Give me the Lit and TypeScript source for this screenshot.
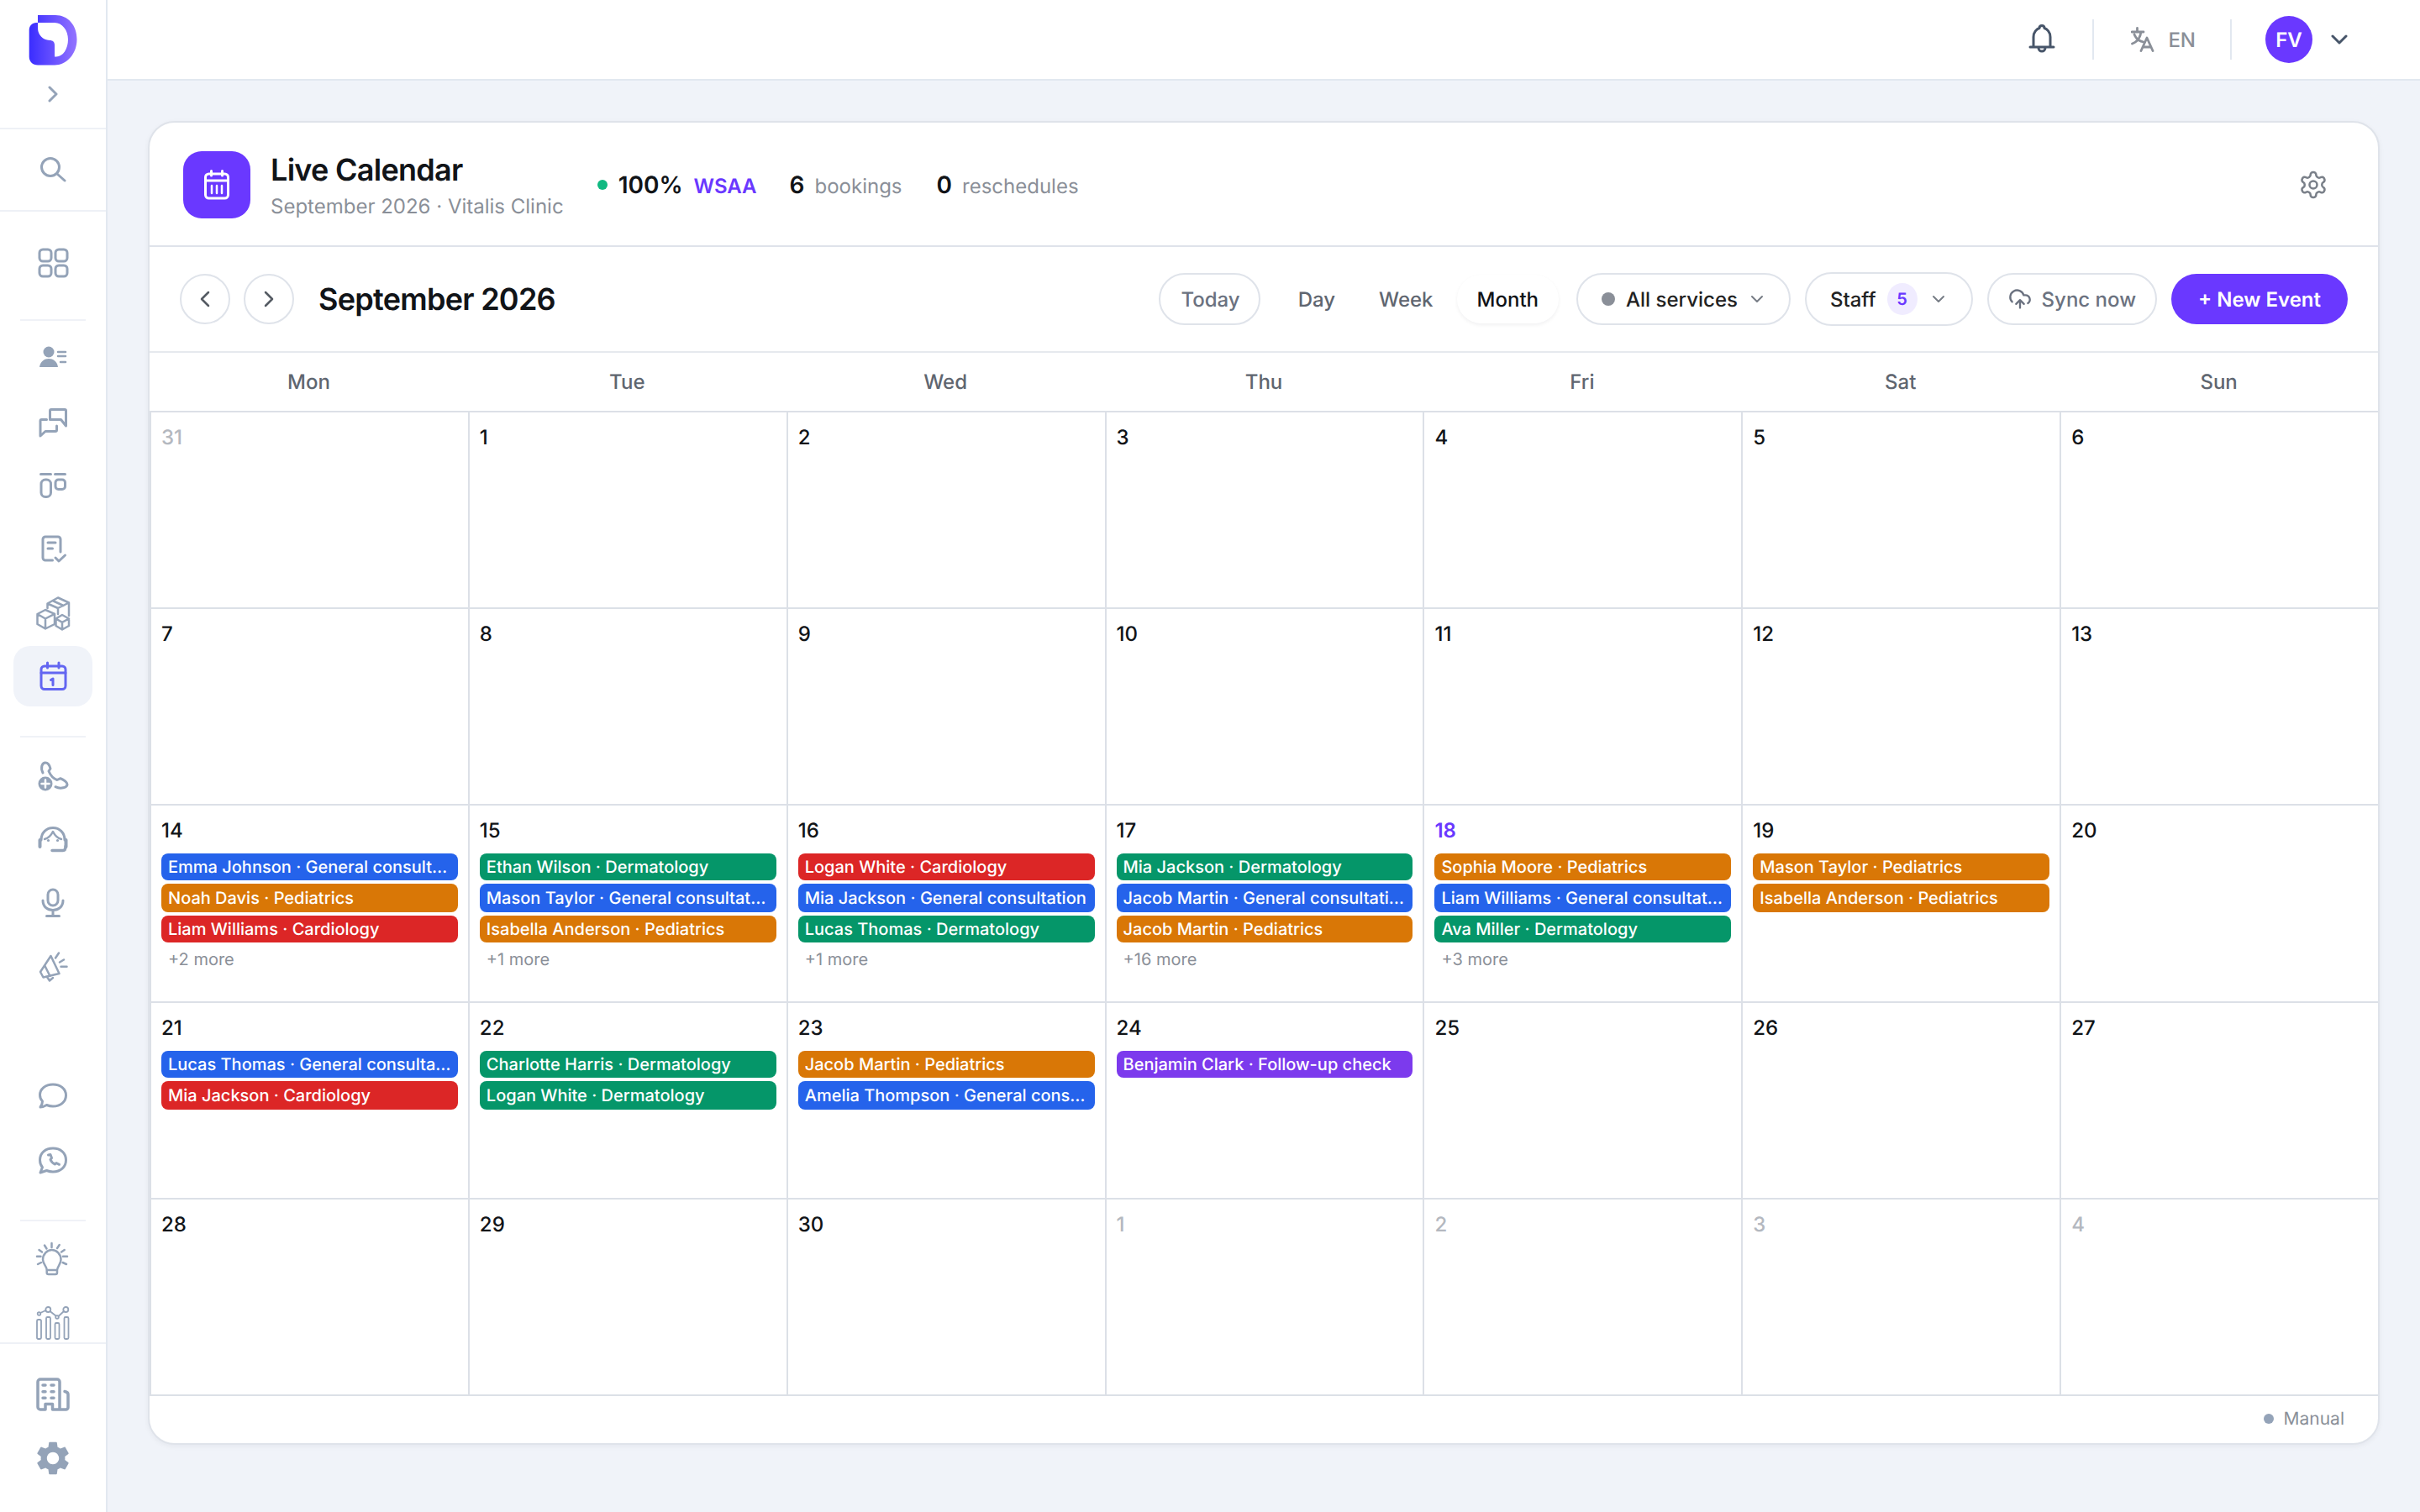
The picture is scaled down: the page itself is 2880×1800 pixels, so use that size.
import { LitElement, html, css, svg } from 'lit';
import { customElement } from 'lit/decorators.js';

type Ev = [string, string];
type Day = { n: number; out?: boolean; today?: boolean; ev?: Ev[]; more?: number };

const GC = 'General consultation';
const weeks: Day[][] = [
  [{ n: 31, out: true }, { n: 1 }, { n: 2 }, { n: 3 }, { n: 4 }, { n: 5 }, { n: 6 }],
  [{ n: 7 }, { n: 8 }, { n: 9 }, { n: 10 }, { n: 11 }, { n: 12 }, { n: 13 }],
  [
    { n: 14, more: 2, ev: [[`Emma Johnson · ${GC}`, 'blue'], ['Noah Davis · Pediatrics', 'orange'], ['Liam Williams · Cardiology', 'red']] },
    { n: 15, more: 1, ev: [['Ethan Wilson · Dermatology', 'green'], [`Mason Taylor · ${GC}`, 'blue'], ['Isabella Anderson · Pediatrics', 'orange']] },
    { n: 16, more: 1, ev: [['Logan White · Cardiology', 'red'], [`Mia Jackson · ${GC}`, 'blue'], ['Lucas Thomas · Dermatology', 'green']] },
    { n: 17, more: 16, ev: [['Mia Jackson · Dermatology', 'green'], [`Jacob Martin · ${GC}`, 'blue'], ['Jacob Martin · Pediatrics', 'orange']] },
    { n: 18, today: true, more: 3, ev: [['Sophia Moore · Pediatrics', 'orange'], [`Liam Williams · ${GC}`, 'blue'], ['Ava Miller · Dermatology', 'green']] },
    { n: 19, ev: [['Mason Taylor · Pediatrics', 'orange'], ['Isabella Anderson · Pediatrics', 'orange']] },
    { n: 20 },
  ],
  [
    { n: 21, ev: [[`Lucas Thomas · ${GC}`, 'blue'], ['Mia Jackson · Cardiology', 'red']] },
    { n: 22, ev: [['Charlotte Harris · Dermatology', 'green'], ['Logan White · Dermatology', 'green']] },
    { n: 23, ev: [['Jacob Martin · Pediatrics', 'orange'], [`Amelia Thompson · ${GC}`, 'blue']] },
    { n: 24, ev: [['Benjamin Clark · Follow-up check', 'purple']] },
    { n: 25 }, { n: 26 }, { n: 27 },
  ],
  [{ n: 28 }, { n: 29 }, { n: 30 }, { n: 1, out: true }, { n: 2, out: true }, { n: 3, out: true }, { n: 4, out: true }],
];

const icon = (body: unknown, sw = 3) => html`<svg class="ic" viewBox="0 0 40 40" stroke-width=${sw}>${body}</svg>`;

const icons = {
  grid: icon(svg`<rect x="4" y="4" width="14" height="14" rx="4"/><rect x="23" y="4" width="14" height="14" rx="4"/><rect x="4" y="23" width="14" height="13" rx="4"/><rect x="23" y="23" width="14" height="13" rx="4"/>`),
  person: icon(svg`<circle cx="15" cy="14" r="6.5" fill="currentColor" stroke="none"/><path d="M4 32C5 25 10 22 15 22s10 3 11 10z" fill="currentColor" stroke="none"/><path d="M26 14h9M26 19h9M29 26h6" stroke-width="2.5"/>`),
  chat: icon(svg`<path d="M16.5 18.5V8a1.5 1.5 0 0 1 1.5-1.5h16A1.5 1.5 0 0 1 35.5 8v18l-6-7.500z"/><path d="M24.500 26v5a1.500 1.500 0 0 1-1.500 1.500H11L5 38V20a1.500 1.500 0 0 1 1.500-1.500h6"/>`),
  kanban: icon(svg`<path d="M5.500 7.500h12M22.500 7.500h12"/><rect x="6" y="14" width="11.500" height="20.500" rx="5"/><rect x="23" y="14" width="11.500" height="11.500" rx="3.500"/>`),
  noteCheck: icon(svg`<path d="M19.500 34H11a3 3 0 0 1-3-3V9a3 3 0 0 1 3-3h15a3 3 0 0 1 3 3v15"/><path d="M14 13h9M14 20h5.500"/><path d="M23 31l4 4 7.500-7"/>`),
  boxes: icon(svg`<path d="M1.500 22L11 17l11 4.800V34l-11 5.500L1.500 34zM1.500 22L11 27.500l11-5.700M11 27.500v12"/><path d="M13.500 15V9.500L26 2.500l13 6v15.500M13.500 9.500L26 15l13-6.500M26 15v7M19.500 6l13 6"/><path d="M23.500 27.500L31 23l8 4.500V36l-8 4.500L23.500 36zM23.500 27.500l7.500 4.300 8-4.300M31 31.800v8.500"/>`, 2.5),
  calendar: icon(svg`<rect x="6" y="8" width="29" height="27.500" rx="4"/><path d="M6 16h29M13.500 4v6M27 4v6"/><path d="M17.500 24.500l2.500-1.500v7.500"/>`),
  phonePlus: icon(svg`<path d="M8 17C5 11 7 5 11 5c3 0 5 3 6 7l-2 3c2 5 6 9 10 10.500l4-1.800c4 1.300 8 5 8 7 0 4-8 6-14 3"/><circle cx="11" cy="30" r="8.500" fill="currentColor" stroke="none"/><path d="M11 25.500v9M6.500 30h9" stroke="#fff" stroke-width="2.500"/>`),
  headset: icon(svg`<path d="M6 21C6 12 12.500 6.500 20 6.500S34 12 34 21"/><path d="M4.500 21v8M35.500 21v8" stroke-width="4"/><path d="M10 20c4-1 7.500-4 10-9 2.500 5 6 8 10 9" stroke-width="2.500"/><circle cx="14.500" cy="21.500" r="1.600" fill="currentColor" stroke="none"/><circle cx="25.500" cy="21.500" r="1.600" fill="currentColor" stroke="none"/><path d="M19 33.500h13c2 0 3-2 3-5" stroke-width="3.500"/>`),
  mic: icon(svg`<rect x="14" y="4" width="12" height="19" rx="6"/><path d="M8 17c0 7 5 11.500 12 11.500S32 24 32 17M20 28.500v7M12.500 35.500h15"/>`),
  megaphone: icon(svg`<path d="M5 26L17.500 7l10 21-19 4.500z"/><path d="M10.500 19l6 12"/><path d="M13 32l3 4.500 4-3.500"/><path d="M23 9.500L27 3.500M28 14.500l5-3M29.500 19.700h7"/>`, 2.5),
  bubble: icon(svg`<path d="M20 6c9 0 15.500 5.500 15.500 13S29 32 20 32c-3 0-5-.500-7.500-1.500-2.500 1.500-5 2.500-7.500 2.500 1.500-2 2.500-4.500 2.500-7-2-2-3-4.500-3-7.500C4.500 11.500 11 6 20 6z"/>`),
  whatsapp: icon(svg`<path d="M20 6c9 0 15.500 5.500 15.500 14S29 34 20 34c-3 0-5-.500-7.500-1.500L5 35l2.500-6.500c-2-2-3-4.500-3-8.500C4.500 11.500 11 6 20 6z"/><path d="M14.500 14l2.500-.500 1.500 4-1.500 2c1 2.500 3 4.500 5.500 5.500l1.500-1.500 3.500 1.800"/>`),
  bulb: icon(svg`<path d="M12.700 33c0-5-4.700-7-4.700-12.500C8 14 13 9 18.700 9s10.800 5 10.800 11.500C29.500 26 25.500 28 25 33zM12.700 33v3a2 2 0 0 0 2 2H23a2 2 0 0 0 2-2v-3"/><path d="M18.500 1v5M10 3.500l2.500 4M27.700 3l-2.700 4M3.500 9l3.500 2.500M33.700 9L30 11.500M1 16.700h4.500M32 16.700h5M2 26l4-2M31.700 24l4.300 2"/>`, 2.5),
  chart: icon(svg`<rect x="1" y="16" width="5" height="23" rx="1.500"/><rect x="12" y="13" width="5" height="26" rx="1.500"/><rect x="22.500" y="20" width="5" height="19" rx="1.500"/><rect x="33.500" y="13" width="5" height="26" rx="1.500"/><circle cx="3.500" cy="9" r="1.800"/><circle cx="14.300" cy="4" r="3"/><circle cx="25" cy="13" r="1.800"/><circle cx="35.300" cy="4" r="3"/><path d="M5 8l6.500-3M16.500 6l7 5.500M26.500 12l6.500-6"/>`, 1.800),
  building: icon(svg`<path d="M11 38H5a3 3 0 0 1-3-3V5a3 3 0 0 1 3-3h20a3 3 0 0 1 3 3v33h-8.500v-6.500H11zM28 38h7.500a2.500 2.500 0 0 0 2.500-2.500V20c0-1.500-1.500-3-4-3.500"/><path d="M8 9h3M18 9h3M8 16.700h3M18 16.700h3M8 24.300h3M18 24.300h3"/>`, 3.500),
};

const solidGear = html`<svg class="ic solid" viewBox="2 2 20 20"><path d="M19.140 12.940c.040-.300.060-.610.060-.940 0-.320-.020-.640-.070-.940l2.030-1.580c.180-.140.230-.410.120-.610l-1.920-3.320c-.120-.220-.370-.290-.590-.220l-2.390.960c-.500-.380-1.030-.700-1.620-.940l-.360-2.540c-.040-.240-.240-.410-.480-.410h-3.840c-.240 0-.430.170-.470.410l-.360 2.540c-.590.240-1.130.570-1.620.940l-2.390-.960c-.220-.080-.470 0-.590.220L2.740 8.870c-.120.210-.080.470.120.610l2.030 1.580c-.050.300-.090.630-.090.940s.020.640.070.940l-2.030 1.580c-.180.140-.230.410-.12.610l1.920 3.320c.120.220.370.290.590.220l2.390-.960c.500.380 1.030.700 1.620.940l.360 2.540c.050.240.240.410.480.410h3.840c.240 0 .440-.170.470-.410l.360-2.540c.590-.240 1.130-.560 1.620-.94l2.390.96c.220.080.470 0 .590-.22l1.920-3.320c.120-.220.070-.47-.12-.61l-2.010-1.580zM12 15.600c-1.980 0-3.600-1.620-3.600-3.600s1.620-3.600 3.600-3.600 3.600 1.620 3.600 3.600-1.620 3.600-3.600 3.600z"/></svg>`;

@customElement('app-root')
export class AppRoot extends LitElement {
  static styles = css`
    :host {
      display: flex;
      width: 2880px;
      height: 1800px;
      overflow: hidden;
      background: #f0f3f9;
      color: #111418;
      font-family: Inter, 'Noto Sans', sans-serif;
      font-size: 24px;
      text-rendering: geometricPrecision;
    }
    svg { display: block; flex: none; }

    /* sidebar */
    .side {
      width: 128px;
      flex: none;
      box-sizing: border-box;
      background: #fff;
      border-right: 2px solid #e2e8f0;
      display: flex;
      flex-direction: column;
      color: #94a3b8;
    }
    .side .ic { width: 40px; height: 40px; fill: none; stroke: currentColor; stroke-linecap: round; stroke-linejoin: round; overflow: visible; }
    .side .ic.solid { fill: currentColor; stroke: none; }
    .brand {
      height: 154px;
      box-sizing: border-box;
      border-bottom: 2px solid #eef1f6;
      padding-top: 18px;
      display: flex;
      flex-direction: column;
      align-items: center;
    }
    .brand .logo { width: 58px; height: 60px; }
    .brand .open { width: 12px; height: 20px; margin-top: 24px; fill: none; stroke: #94a3b8; stroke-width: 3; stroke-linecap: round; stroke-linejoin: round; }
    .finder {
      height: 98px;
      box-sizing: border-box;
      border-bottom: 2px solid #eef1f6;
      display: flex;
      align-items: center;
      justify-content: center;
    }
    .finder svg { width: 32px; height: 32px; fill: none; stroke: #94a3b8; stroke-width: 3; stroke-linecap: round; }
    .nav {
      flex: 1;
      min-height: 0;
      overflow: hidden;
      padding: 25px 16px 0;
      display: flex;
      flex-direction: column;
      gap: 4px;
    }
    .item {
      height: 72px;
      flex: none;
      border-radius: 20px;
      display: flex;
      align-items: center;
      justify-content: center;
    }
    .item.on { background: #f0f3f9; color: #6366f1; }
    .sep { height: 2px; flex: none; background: #f0f2f7; margin: 31px 8px 5px; }
    .sep.tight { margin: 27px 8px 3px; }
    .hole { height: 74px; flex: none; }
    .nav-foot {
      border-top: 2px solid #eef1f6;
      padding: 24px 16px 28px;
      display: flex;
      flex-direction: column;
      gap: 4px;
    }

    /* top bar */
    .main { flex: 1; min-width: 0; display: flex; flex-direction: column; }
    .top {
      height: 96px;
      flex: none;
      box-sizing: border-box;
      background: #fff;
      border-bottom: 2px solid #e2e8f0;
      padding-right: 86px;
      display: flex;
      align-items: center;
      justify-content: flex-end;
    }
    .bell { width: 32px; height: 36px; fill: none; stroke: #475569; stroke-width: 3; stroke-linecap: round; stroke-linejoin: round; }
    .vr { width: 2px; height: 48px; background: #e2e8f0; margin: 0 44px; }
    .vr.near { margin: 0 40px 0 41px; }
    .lang { display: flex; align-items: center; gap: 16px; color: #8a8f98; font-weight: 500; }
    .lang svg { width: 28px; height: 30px; fill: none; stroke: #8a8f98; stroke-width: 2.800; stroke-linecap: round; stroke-linejoin: round; }
    .avatar {
      width: 56px;
      height: 56px;
      border-radius: 50%;
      background: #6a38ff;
      color: #fff;
      font-weight: 600;
      display: flex;
      align-items: center;
      justify-content: center;
    }
    .caret { width: 20px; height: 12px; margin-left: 22px; fill: none; stroke: #475569; stroke-width: 3; stroke-linecap: round; stroke-linejoin: round; }

    /* card */
    .page { flex: 1; min-height: 0; display: flex; padding: 48px 48px 80px; }
    .card {
      flex: 1;
      min-width: 0;
      box-sizing: border-box;
      background: #fff;
      border: 2px solid #dfe3ea;
      border-radius: 32px;
      box-shadow: 0 2px 6px rgba(15, 23, 42, 0.05);
      display: flex;
      flex-direction: column;
      overflow: hidden;
    }
    .head {
      height: 148px;
      flex: none;
      box-sizing: border-box;
      border-bottom: 2px solid #dfe3ea;
      padding: 2px 59px 0 40px;
      display: flex;
      align-items: center;
    }
    .tile {
      width: 80px;
      height: 80px;
      border-radius: 22px;
      background: #6a38ff;
      display: flex;
      align-items: center;
      justify-content: center;
    }
    .tile svg { width: 32px; height: 36px; fill: none; stroke: #fff; stroke-linecap: round; stroke-linejoin: round; }
    .names { margin-left: 24px; padding-top: 2px; }
    .names h1 { margin: 0; font-size: 36px; line-height: 44px; font-weight: 600; letter-spacing: -0.72px; }
    .names p { margin: 6px 0 0; line-height: 32px; color: #8a8f98; }
    .stats { display: flex; align-items: baseline; margin-left: 40px; color: #8a8f98; }
    .stats .dot { width: 12px; height: 12px; border-radius: 50%; background: #10b981; margin-right: 13px; align-self: center; }
    .stats b { color: #111418; font-weight: 600; font-size: 28px; }
    .stats .wsaa { color: #6a38ff; font-weight: 600; margin-left: 13px; margin-right: 39px; }
    .stats .lbl { margin-left: 12px; margin-right: 41px; }
    .cog { margin-left: auto; width: 36px; height: 36px; fill: none; stroke: #7a8089; stroke-width: 1.700; stroke-linecap: round; stroke-linejoin: round; }

    /* toolbar */
    .tools {
      height: 126px;
      flex: none;
      box-sizing: border-box;
      border-bottom: 2px solid #e6e9ee;
      padding: 0 36px;
      display: flex;
      align-items: center;
    }
    .round {
      width: 60px;
      height: 60px;
      box-sizing: border-box;
      border: 2px solid #dfe3ea;
      border-radius: 50%;
      display: flex;
      align-items: center;
      justify-content: center;
      margin-right: 16px;
    }
    .round svg { width: 12px; height: 20px; fill: none; stroke: #555b63; stroke-width: 2.500; stroke-linecap: round; stroke-linejoin: round; }
    .tools h2 { margin: 0 0 0 13px; font-size: 36px; font-weight: 600; letter-spacing: -0.72px; }
    .actions { margin-left: auto; display: flex; align-items: center; gap: 17px; font-weight: 500; }
    .pill {
      height: 62px;
      box-sizing: border-box;
      border: 2px solid #dfe3ea;
      border-radius: 31px;
      background: #fff;
      display: flex;
      align-items: center;
      color: #222;
      white-space: nowrap;
    }
    .today { padding: 0 22px 0 24px; color: #6b7280; }
    .seg { display: flex; gap: 4px; padding: 4px; color: #5f6670; }
    .seg span { height: 58px; padding: 0 24px; display: flex; align-items: center; border-radius: 29px; }
    .seg .on { color: #111418; background: #fff; box-shadow: 0 2px 4px rgba(15, 23, 42, 0.06); }
    .services { padding: 0 30px 0 28px; }
    .services i { width: 16px; height: 16px; border-radius: 50%; background: #8a8f98; margin-right: 13px; }
    .small-caret { width: 16px; height: 10px; margin-left: 15px; fill: none; stroke: #777d86; stroke-width: 2; stroke-linecap: round; stroke-linejoin: round; }
    .staff { height: 64px; border-radius: 32px; padding: 0 31px 0 28px; }
    .staff em { font-style: normal; width: 36px; height: 38px; margin-left: 13px; border-radius: 50%; background: #f0ecff; color: #6a38ff; font-size: 20px; font-weight: 600; display: flex; align-items: center; justify-content: center; }
    .staff .small-caret { margin-left: 17px; }
    .sync { padding: 0 23px; color: #6b7280; gap: 12px; }
    .sync svg { width: 28px; height: 28px; fill: none; stroke: #6b7280; stroke-width: 2; stroke-linecap: round; stroke-linejoin: round; }
    .create { height: 60px; border-radius: 30px; padding: 0 32px; background: #6a38ff; color: #fff; font-weight: 600; display: flex; align-items: center; }

    /* calendar */
    .dow { height: 69px; flex: none; box-sizing: border-box; padding-bottom: 1px; display: grid; grid-template-columns: repeat(7, 1fr); }
    .dow div { display: flex; align-items: center; justify-content: center; font-weight: 500; color: #5f6670; }
    .month { flex: 1; min-height: 0; display: grid; grid-template-columns: repeat(7, minmax(0, 1fr)); grid-template-rows: repeat(5, 1fr); }
    .cell {
      min-width: 0;
      box-sizing: border-box;
      border-top: 2px solid #dce0e7;
      border-left: 2px solid #dce0e7;
      padding: 14px 12px 0;
    }
    .num { height: 32px; line-height: 32px; font-weight: 500; color: #111418; }
    .num.out { color: #b4b8bf; }
    .num.now { color: #6a38ff; font-weight: 600; }
    .list { margin-top: 11px; display: flex; flex-direction: column; gap: 4px; }
    .ev {
      height: 32px;
      line-height: 32px;
      box-sizing: border-box;
      padding: 0 8px;
      border-radius: 8px;
      color: #fff;
      font-size: 20px;
      font-weight: 500;
      white-space: nowrap;
      overflow: hidden;
      text-overflow: ellipsis;
    }
    .ev:nth-child(2) { height: 34px; line-height: 34px; }
    .blue { background: #2563eb; }
    .orange { background: #d97706; }
    .red { background: #dc2626; }
    .green { background: #059669; }
    .purple { background: #7c3aed; }
    .more { margin-top: 5px; padding-left: 8px; font-size: 20px; line-height: 30px; color: #8a8f98; }
    .foot {
      height: 58px;
      flex: none;
      box-sizing: border-box;
      border-top: 2px solid #dce0e7;
      padding: 0 40px 2px 0;
      display: flex;
      align-items: center;
      justify-content: flex-end;
      gap: 12px;
      font-size: 21px;
      color: #8a8f98;
    }
    .foot i { width: 12px; height: 12px; border-radius: 50%; background: #94a3b8; }
  `;

  renderSide() {
    return html`
      <aside class="side">
        <div class="brand">
          <svg class="logo" viewBox="35 18 58 60">
            <defs>
              <linearGradient id="lg" x1="0" x2="1" y1="0" y2="0">
                <stop offset="0" stop-color="#3a2dff" />
                <stop offset="1" stop-color="#9474ff" />
              </linearGradient>
            </defs>
            <path
              fill="url(#lg)"
              d="M46 18H67C82 18 92.500 30 92.500 47C92.500 64.500 80 77.500 66 77.500H46C40 77.500 35.700 73.500 35.700 67.500V36C35.700 30.500 39.500 27 44 27H46V34C46.500 42 52 47.500 60 48C64 48 66 50 66 54V67.500H68C76 67.500 82 58 82 47C82 36 75 27 66 27H46Z"
            />
          </svg>
          <svg class="open" viewBox="0 0 12 20"><path d="M2 2l8 8-8 8" /></svg>
        </div>
        <div class="finder">
          <svg viewBox="0 0 32 32"><circle cx="13" cy="13" r="10.500" /><path d="M21 21l9 8" /></svg>
        </div>
        <nav class="nav">
          <div class="item">${icons.grid}</div>
          <div class="sep tight"></div>
          <div class="item">${icons.person}</div>
          <div class="item">${icons.chat}</div>
          <div class="item">${icons.kanban}</div>
          <div class="item">${icons.noteCheck}</div>
          <div class="item">${icons.boxes}</div>
          <div class="item on">${icons.calendar}</div>
          <div class="sep"></div>
          <div class="item">${icons.phonePlus}</div>
          <div class="item">${icons.headset}</div>
          <div class="item">${icons.mic}</div>
          <div class="item">${icons.megaphone}</div>
          <div class="hole"></div>
          <div class="item">${icons.bubble}</div>
          <div class="item">${icons.whatsapp}</div>
          <div class="sep"></div>
          <div class="item">${icons.bulb}</div>
          <div class="item">${icons.chart}</div>
        </nav>
        <div class="nav-foot">
          <div class="item">${icons.building}</div>
          <div class="item">${solidGear}</div>
        </div>
      </aside>
    `;
  }

  renderTop() {
    return html`
      <header class="top">
        <svg class="bell" viewBox="0 0 32 36">
          <path d="M2 27H30M6 27V15C6 9 10 5.500 13 4.500C13 2.500 14.500 1.500 16 1.500S19 2.500 19 4.500C22 5.500 26 9 26 15V27M12 28a4 4 0 0 0 8 0" />
        </svg>
        <div class="vr"></div>
        <div class="lang">
          <svg viewBox="0 0 28 30">
            <path d="M1 6H15M7.500 1.500V6M12 6C11 13 7 18 1.500 20M4 9C6 14 10 17 15 18M12 28.500L19 13L26 28.500M14 24H24" />
          </svg>
          <span>EN</span>
        </div>
        <div class="vr near"></div>
        <div class="avatar">FV</div>
        <svg class="caret" viewBox="0 0 20 12"><path d="M2 2l8 8 8-8" /></svg>
      </header>
    `;
  }

  renderHead() {
    return html`
      <div class="head">
        <div class="tile">
          <svg viewBox="0 0 32 36" stroke-width="3">
            <rect x="2.500" y="5" width="27" height="29" rx="4" />
            <path d="M9.500 1.500V7M22.500 1.500V7M2.500 13H29.500" />
            <path d="M10 19V28M16 19V28M22 19V28" stroke-width="2.500" />
          </svg>
        </div>
        <div class="names">
          <h1>Live Calendar</h1>
          <p>September 2026 · Vitalis Clinic</p>
        </div>
        <div class="stats">
          <span class="dot"></span>
          <b>100%</b><span class="wsaa">WSAA</span>
          <b>6</b><span class="lbl">bookings</span>
          <b>0</b><span class="lbl">reschedules</span>
        </div>
        <svg class="cog" viewBox="0 0 24 24">
          <path d="M12.220 2h-.440a2 2 0 0 0-2 2v.180a2 2 0 0 1-1 1.730l-.430.250a2 2 0 0 1-2 0l-.150-.080a2 2 0 0 0-2.730.730l-.220.380a2 2 0 0 0 .730 2.730l.150.100a2 2 0 0 1 1 1.720v.510a2 2 0 0 1-1 1.740l-.150.090a2 2 0 0 0-.730 2.730l.220.380a2 2 0 0 0 2.730.730l.150-.080a2 2 0 0 1 2 0l.430.250a2 2 0 0 1 1 1.730V20a2 2 0 0 0 2 2h.440a2 2 0 0 0 2-2v-.180a2 2 0 0 1 1-1.730l.430-.250a2 2 0 0 1 2 0l.150.080a2 2 0 0 0 2.730-.730l.220-.390a2 2 0 0 0-.730-2.730l-.150-.080a2 2 0 0 1-1-1.740v-.500a2 2 0 0 1 1-1.740l.150-.090a2 2 0 0 0 .730-2.730l-.220-.380a2 2 0 0 0-2.730-.730l-.150.080a2 2 0 0 1-2 0l-.430-.250a2 2 0 0 1-1-1.730V4a2 2 0 0 0-2-2z" />
          <circle cx="12" cy="12" r="3" />
        </svg>
      </div>
    `;
  }

  renderTools() {
    const caret = html`<svg class="small-caret" viewBox="0 0 16 10"><path d="M2 2l6 6 6-6" /></svg>`;
    return html`
      <div class="tools">
        <div class="round"><svg viewBox="0 0 12 20"><path d="M10 2l-8 8 8 8" /></svg></div>
        <div class="round"><svg viewBox="0 0 12 20"><path d="M2 2l8 8-8 8" /></svg></div>
        <h2>September 2026</h2>
        <div class="actions">
          <div class="pill today">Today</div>
          <div class="seg"><span>Day</span><span>Week</span><span class="on">Month</span></div>
          <div class="pill services"><i></i>All services${caret}</div>
          <div class="pill staff">Staff<em>5</em>${caret}</div>
          <div class="pill sync">
            <svg viewBox="0 0 24 24">
              <path d="M12 13v8M4 14.900A7 7 0 1 1 15.710 8h1.790a4.500 4.500 0 0 1 2.500 8.240M8 17l4-4 4 4" />
            </svg>
            Sync now
          </div>
          <div class="create">+ New Event</div>
        </div>
      </div>
    `;
  }

  renderDay(d: Day) {
    const cls = d.out ? 'num out' : d.today ? 'num now' : 'num';
    return html`
      <div class="cell">
        <div class=${cls}>${d.n}</div>
        ${d.ev
          ? html`<div class="list">${d.ev.map(([t, c]) => html`<div class="ev ${c}">${t}</div>`)}</div>`
          : null}
        ${d.more ? html`<div class="more">+${d.more} more</div>` : null}
      </div>
    `;
  }

  render() {
    return html`
      ${this.renderSide()}
      <div class="main">
        ${this.renderTop()}
        <main class="page">
          <section class="card">
            ${this.renderHead()} ${this.renderTools()}
            <div class="dow">
              ${['Mon', 'Tue', 'Wed', 'Thu', 'Fri', 'Sat', 'Sun'].map((d) => html`<div>${d}</div>`)}
            </div>
            <div class="month">${weeks.flat().map((d) => this.renderDay(d))}</div>
            <div class="foot"><i></i>Manual</div>
          </section>
        </main>
      </div>
    `;
  }
}
